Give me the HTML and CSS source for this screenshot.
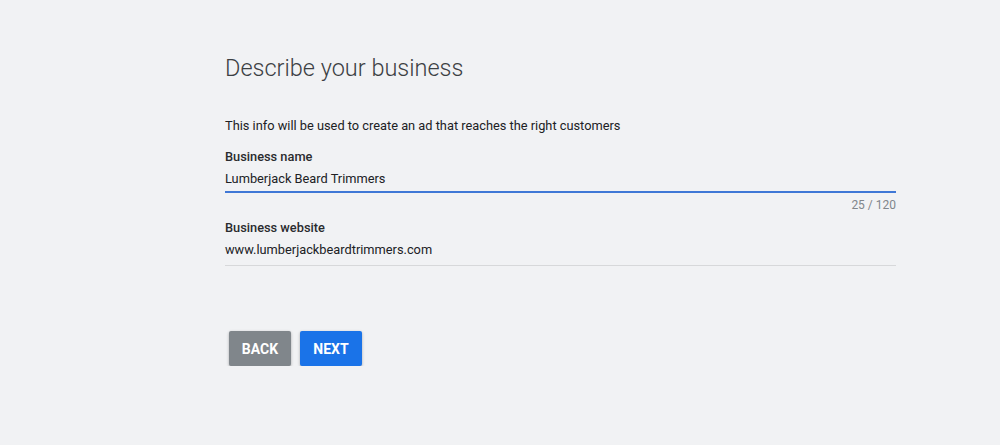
FILE: index.html
```html
<!DOCTYPE html>
<html lang="en">
<head>
  <meta charset="UTF-8">
  <title>Describe your business</title>
  <link rel="stylesheet" href="styles.css">
</head>
<body>
  <div class="wrap">
    <h1>Describe your business</h1>
    <p class="intro">This info will be used to create an ad that reaches the right customers</p>

    <div class="field active">
      <div class="label">Business name</div>
      <div class="value">Lumberjack Beard Trimmers</div>
    </div>
    <div class="counter">25 / 120</div>

    <div class="field">
      <div class="label">Business website</div>
      <div class="value">www.lumberjackbeardtrimmers.com</div>
    </div>

    <div class="actions">
      <button class="btn back">BACK</button>
      <button class="btn next">NEXT</button>
    </div>
  </div>
</body>
</html>
```

FILE: styles.css
```css
body {
  margin: 0;
  background: #f1f2f4;
  font-family: Roboto, Arial, sans-serif;
  color: #202124;
}
.wrap {
  width: 671px;
  margin-left: 225px;
  padding-top: 53px;
}
h1 {
  margin: 0;
  font-size: 23.5px;
  font-weight: 300;
  line-height: 30px;
  color: #3c4043;
}
.intro {
  margin: 35px 0 0;
  font-size: 12.8px;
  line-height: 16px;
}
.field {
  margin-top: 8px;
  border-bottom: 1px solid #d7d8da;
  padding-bottom: 7px;
}
.field.active {
  margin-top: 15px;
  border-bottom: 2px solid #4078d6;
  padding-bottom: 4px;
}
.label {
  font-size: 12.8px;
  font-weight: 500;
  line-height: 16px;
  color: #2a2b2e;
}
.value {
  margin-top: 6px;
  font-size: 12.8px;
  line-height: 16px;
}
.counter {
  text-align: right;
  font-size: 12px;
  line-height: 14px;
  margin-top: 5px;
  color: #80868b;
}
.actions {
  margin-top: 65px;
  padding-left: 4px;
  display: flex;
  gap: 9px;
}
.btn {
  height: 35px;
  width: 62px;
  border: none;
  border-radius: 2px;
  color: white;
  font-family: Roboto, Arial, sans-serif;
  font-weight: 700;
  font-size: 14px;
  box-shadow: 0 1px 3px rgba(0,0,0,0.3);
  cursor: pointer;
}
.back {
  background: #80868b;
}
.next {
  background: #1a73e8;
}
```
